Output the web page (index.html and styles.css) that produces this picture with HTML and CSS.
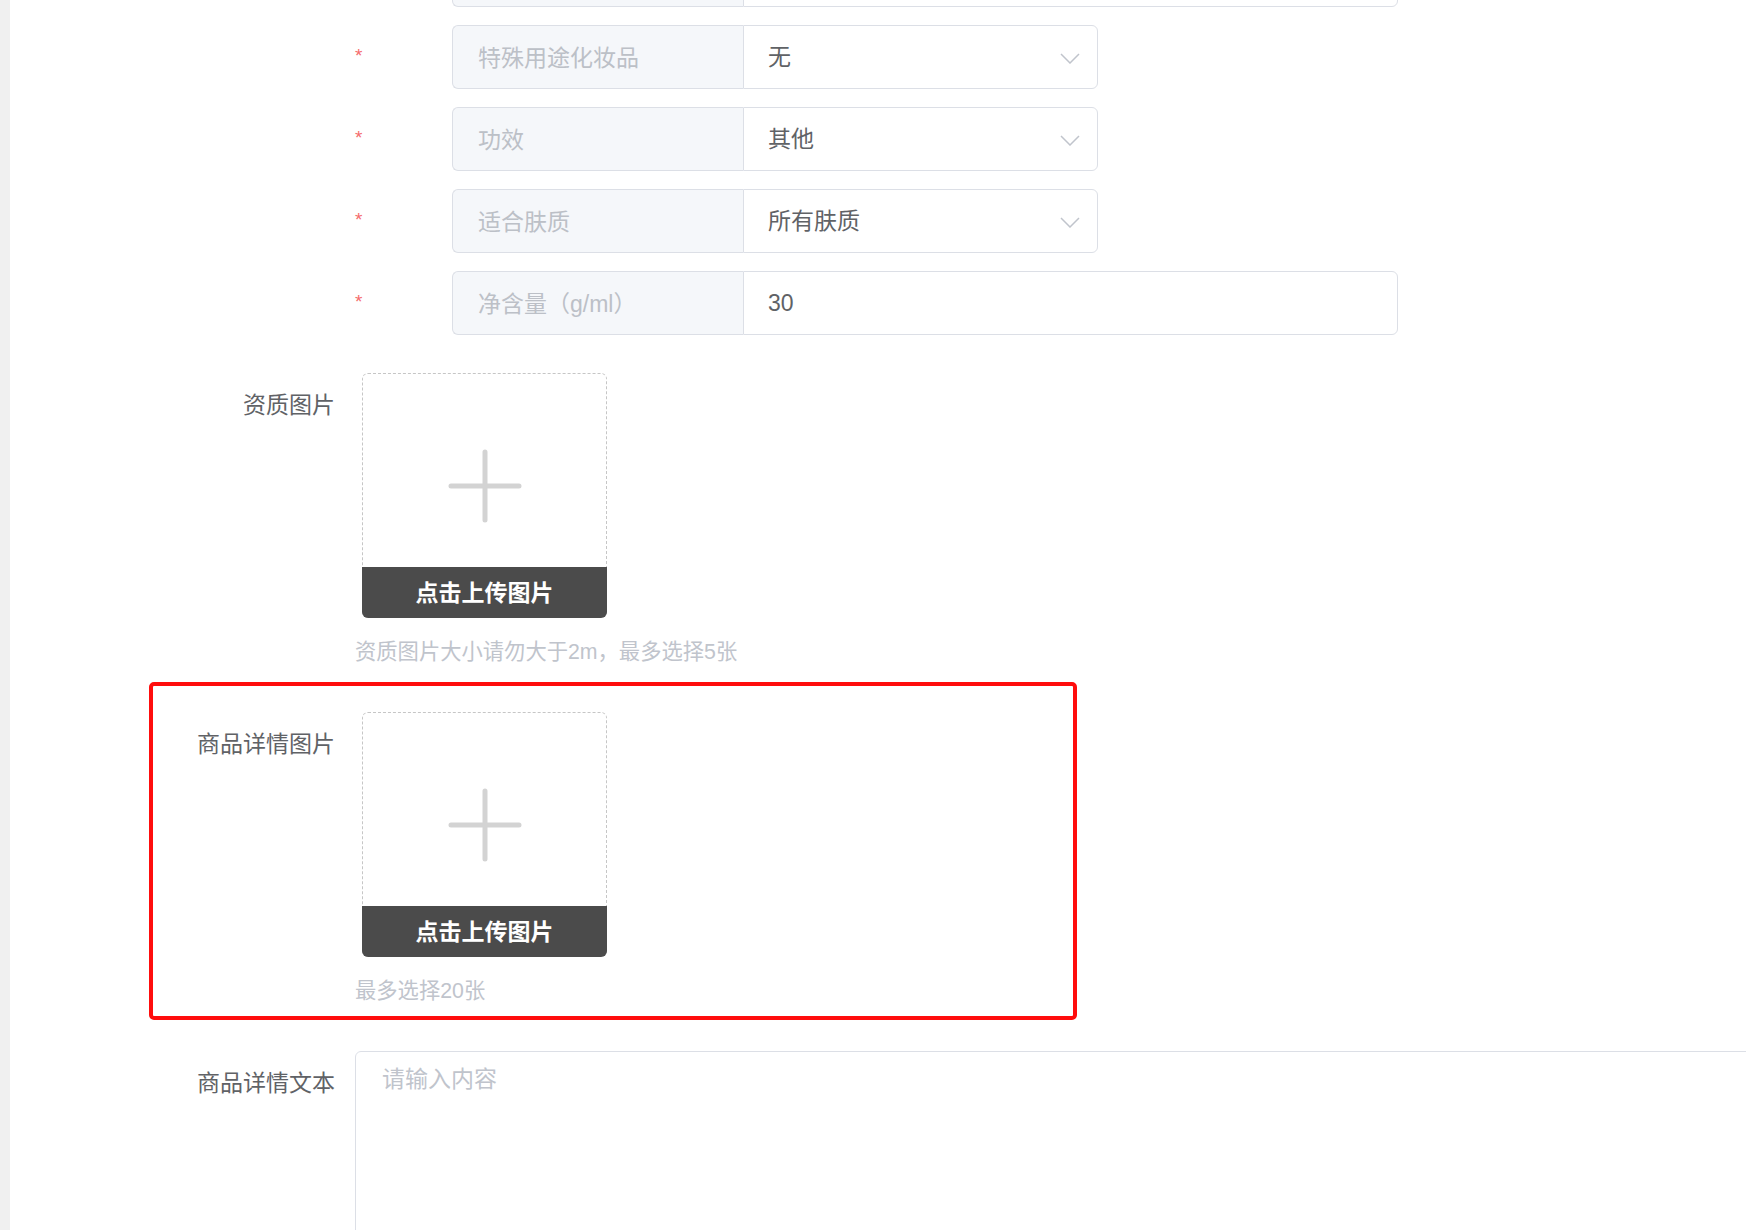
FILE: index.html
```html
<!DOCTYPE html>
<html lang="zh-CN">
<head>
<meta charset="utf-8">
<title>商品信息</title>
<link rel="stylesheet" href="styles.css">
</head>
<body>
<div class="page">
  <div class="strip"></div>
  <div class="main">
    <div class="specs">
      <div class="spec-row">
        <span class="star"></span>
        <div class="group">
          <div class="g-label"></div>
          <div class="g-value wide"></div>
        </div>
      </div>
      <div class="spec-row">
        <span class="star">*</span>
        <div class="group">
          <div class="g-label">特殊用途化妆品</div>
          <div class="g-value select"><span>无</span>
            <svg class="chev" width="20" height="11" viewBox="0 0 20 11"><polyline points="1,1 10,10 19,1" fill="none" stroke="#c0c4cc" stroke-width="1.5"/></svg>
          </div>
        </div>
      </div>
      <div class="spec-row">
        <span class="star">*</span>
        <div class="group">
          <div class="g-label">功效</div>
          <div class="g-value select"><span>其他</span>
            <svg class="chev" width="20" height="11" viewBox="0 0 20 11"><polyline points="1,1 10,10 19,1" fill="none" stroke="#c0c4cc" stroke-width="1.5"/></svg>
          </div>
        </div>
      </div>
      <div class="spec-row">
        <span class="star">*</span>
        <div class="group">
          <div class="g-label">适合肤质</div>
          <div class="g-value select"><span>所有肤质</span>
            <svg class="chev" width="20" height="11" viewBox="0 0 20 11"><polyline points="1,1 10,10 19,1" fill="none" stroke="#c0c4cc" stroke-width="1.5"/></svg>
          </div>
        </div>
      </div>
      <div class="spec-row">
        <span class="star">*</span>
        <div class="group">
          <div class="g-label">净含量（g/ml）</div>
          <div class="g-value wide"><span>30</span></div>
        </div>
      </div>
    </div>

    <div class="form-item">
      <div class="f-label">资质图片</div>
      <div class="f-content">
        <div class="uploader">
          <div class="plus-area">
            <svg width="74" height="74" viewBox="0 0 74 74"><path d="M37 3V71M3 37H71" stroke="#d3d3d3" stroke-width="5" stroke-linecap="round" fill="none"/></svg>
          </div>
          <div class="up-bar">点击上传图片</div>
        </div>
        <div class="tip">资质图片大小请勿大于2m，最多选择5张</div>
      </div>
    </div>

    <div class="form-item highlighted">
      <div class="f-label">商品详情图片</div>
      <div class="f-content">
        <div class="uploader">
          <div class="plus-area">
            <svg width="74" height="74" viewBox="0 0 74 74"><path d="M37 3V71M3 37H71" stroke="#d3d3d3" stroke-width="5" stroke-linecap="round" fill="none"/></svg>
          </div>
          <div class="up-bar">点击上传图片</div>
        </div>
        <div class="tip">最多选择20张</div>
      </div>
    </div>

    <div class="form-item">
      <div class="f-label">商品详情文本</div>
      <div class="f-content clip">
        <div class="textarea">请输入内容</div>
      </div>
    </div>
  </div>
</div>
</body>
</html>
```
FILE: styles.css
```css
html, body {
  margin: 0;
  padding: 0;
  background: #ffffff;
  overflow: hidden;
  height: 1230px;
}
body {
  font-family: "Liberation Sans", "Noto Sans CJK SC", sans-serif;
  color: #606266;
}
.page {
  display: flex;
  height: 1230px;
  overflow: hidden;
}
.strip {
  width: 10px;
  flex: none;
  background: #f0f0f0;
}
.main {
  flex: 1;
  min-width: 0;
  overflow: hidden;
}
.specs {
  margin-top: -57px;
  margin-bottom: 38px;
  padding-left: 345px;
  display: flex;
  flex-direction: column;
  gap: 18px;
}
.spec-row {
  display: flex;
  align-items: center;
  height: 64px;
}
.star {
  width: 97px;
  flex: none;
  color: #f56c6c;
  font-size: 19px;
  line-height: 19px;
  align-self: flex-start;
  margin-top: 21px;
}
.group {
  display: flex;
  height: 64px;
  font-size: 23px;
}
.g-label {
  box-sizing: border-box;
  width: 291px;
  height: 64px;
  background: #f5f7fa;
  border: 1px solid #dcdfe6;
  border-right: none;
  border-radius: 6px 0 0 6px;
  color: #bcc0c7;
  padding-left: 25px;
  line-height: 64px;
  white-space: nowrap;
}
.g-value {
  box-sizing: border-box;
  height: 64px;
  border: 1px solid #dcdfe6;
  border-radius: 0 6px 6px 0;
  background: #fff;
  padding-left: 24px;
  padding-right: 17px;
  line-height: 64px;
  color: #606266;
  display: flex;
  align-items: center;
  justify-content: space-between;
}
.g-value.select { width: 355px; }
.g-value.wide { width: 655px; }
.chev { display: block; margin-top: 2px; }

.form-item {
  display: flex;
  position: relative;
}
.f-label {
  width: 345px;
  flex: none;
  box-sizing: border-box;
  padding-right: 20px;
  text-align: right;
  font-size: 23px;
  line-height: 64px;
  color: #606266;
  white-space: nowrap;
}
.f-content {
  flex: 1;
  min-width: 0;
}
.f-content.clip {
  overflow: hidden;
  height: 200px;
}
.uploader {
  box-sizing: border-box;
  width: 245px;
  height: 245px;
  margin-left: 7px;
  border: 1px dashed #c6c6c6;
  border-radius: 6px;
  display: flex;
  flex-direction: column;
}
.plus-area {
  flex: 1;
  display: flex;
  justify-content: center;
  padding-top: 75px;
}
.plus-area svg { display: block; }
.up-bar {
  height: 51px;
  margin: 0 -1px -1px;
  background: #4b4b4b;
  border-radius: 0 0 6px 6px;
  color: #ffffff;
  font-weight: bold;
  font-size: 23px;
  line-height: 53px;
  text-align: center;
}
.tip {
  margin-top: 16px;
  margin-bottom: 42px;
  line-height: 36px;
  font-size: 21.3px;
  color: #c0c4cc;
  white-space: nowrap;
}
.highlighted::after {
  content: "";
  position: absolute;
  left: 139px;
  top: -30px;
  width: 928px;
  height: 338px;
  box-sizing: border-box;
  border: 4px solid #ff0d0d;
  border-radius: 5px;
  pointer-events: none;
}
.textarea {
  box-sizing: border-box;
  width: 1500px;
  height: 300px;
  border: 1px solid #dcdfe6;
  border-radius: 6px;
  padding: 10px 26px;
  font-size: 23px;
  line-height: 34px;
  color: #c0c4cc;
}
```
